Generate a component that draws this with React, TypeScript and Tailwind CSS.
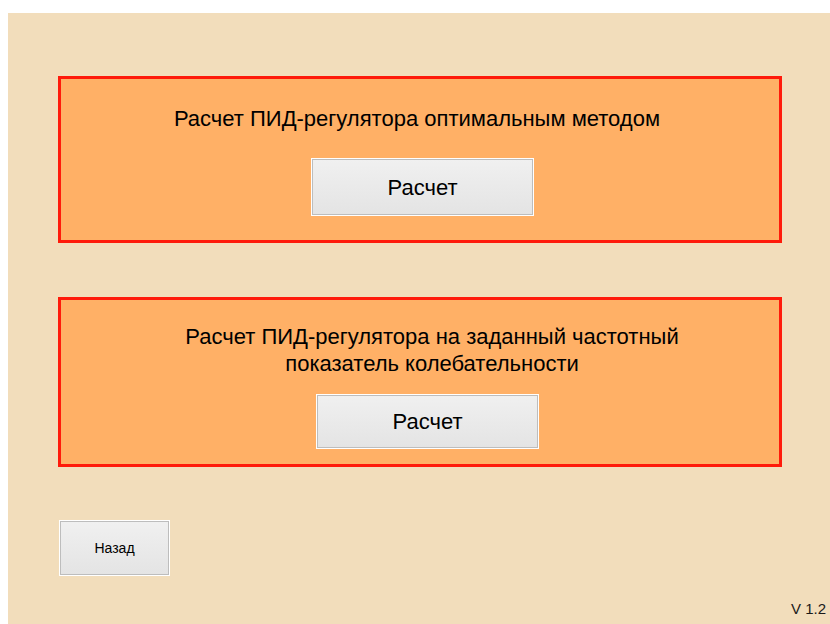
import React from "react";

function PanelButton({ label, className }: { label: string; className?: string }) {
  return (
    <button
      className={
        "border border-white bg-white p-0 " + (className ?? "")
      }
    >
      <div className="flex h-full w-full items-center justify-center border border-[#bdbdbd] bg-gradient-to-b from-[#f0f0f0] to-[#e4e4e4] text-black">
        {label}
      </div>
    </button>
  );
}

export default function App() {
  return (
    <div
      className="flex h-[624px] w-[830px] flex-col bg-white pl-[8px] pt-[13px]"
      style={{ fontFamily: '"Liberation Sans", Arial, sans-serif' }}
    >
      <div className="relative flex flex-1 flex-col bg-[#f2ddbb] pl-[50px] pt-[63px]">
        {/* optimal method */}
        <section className="flex h-[167px] w-[724px] flex-col items-center border-[3px] border-[#ff1a0a] bg-[#ffb066] pt-[27px]">
          <h2 className="ml-[-6px] text-[22px] leading-[26px] text-black">
            Расчет ПИД-регулятора оптимальным методом
          </h2>
          <PanelButton
            label="Расчет"
            className="ml-[5px] mt-[26px] h-[58px] w-[223px] text-[22px]"
          />
        </section>

        {/* given oscillation index */}
        <section className="mt-[54px] flex h-[170px] w-[724px] flex-col items-center border-[3px] border-[#ff1a0a] bg-[#ffb066] pt-[23px]">
          <h2 className="ml-[24px] text-center text-[22px] leading-[27px] text-black">
            Расчет ПИД-регулятора на заданный частотный
            <br />
            показатель колебательности
          </h2>
          <PanelButton
            label="Расчет"
            className="ml-[15px] mt-[17px] h-[55px] w-[223px] text-[22px]"
          />
        </section>

        <PanelButton
          label="Назад"
          className="ml-[1px] mt-[53px] h-[56px] w-[111px] text-[14px]"
        />

        <span className="absolute bottom-[4px] right-[4px] text-[15px] text-[#1a1a1a]">
          V 1.2
        </span>
      </div>
    </div>
  );
}
